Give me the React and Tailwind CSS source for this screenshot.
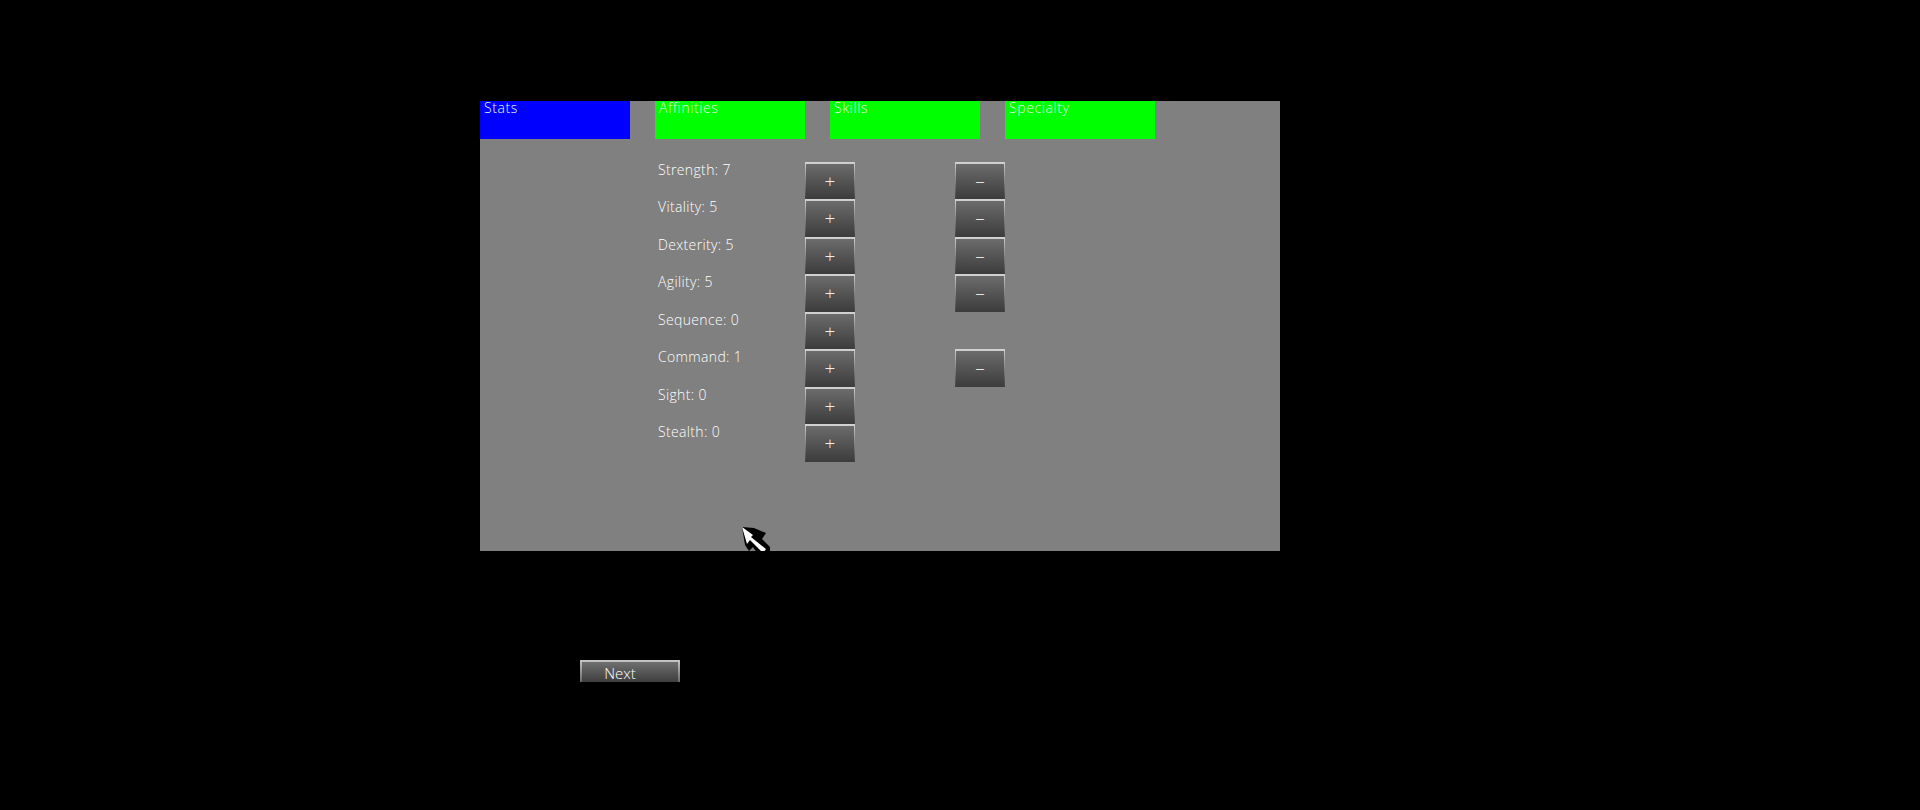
const stats = [
  { name: "Strength", value: 7, minus: true },
  { name: "Vitality", value: 5, minus: true },
  { name: "Dexterity", value: 5, minus: true },
  { name: "Agility", value: 5, minus: true },
  { name: "Sequence", value: 0, minus: false },
  { name: "Command", value: 1, minus: true },
  { name: "Sight", value: 0, minus: false },
  { name: "Stealth", value: 0, minus: false },
];

const tabs = [
  { name: "Stats", active: true },
  { name: "Affinities", active: false },
  { name: "Skills", active: false },
  { name: "Specialty", active: false },
];

const font = "font-['Open_Sans',sans-serif] font-light";

const StatButton = ({ label }) => (
  <button className="block h-[37.5px] w-[50px] bg-gradient-to-b from-[#d4d4d4] to-[#404040] px-px pt-[2px]">
    <span className="flex h-full w-full items-center justify-center bg-gradient-to-b from-[#6c6c6c] to-[#3c3c3c] text-[19px] font-light leading-none text-[#f0f0f0]">
      {label}
    </span>
  </button>
);

const Cursor = () => (
  <div className="absolute left-[260px] top-[424px] h-[26px] w-[30px] overflow-hidden">
    <svg className="h-[30px] w-[30px]" viewBox="0 0 30 30">
      <path d="M2 2 L14 3 L26 8 L22 14 L30 22 L30 30 L18 30 L13 22 L9 26 L5 20 Z" fill="#000" />
      <path d="M2 2 L13 10 L11 12 L26 24 L23 28 L10 15 L7 19 Z" fill="#fff" />
    </svg>
  </div>
);

export default function App() {
  return (
    <div className={`h-[810px] bg-black pt-[101px] ${font}`}>
      <div className="relative ml-[480px] h-[450px] w-[800px] bg-[#808080]">
        <div className="flex gap-[25px]">
          {tabs.map((tab) => (
            <div
              key={tab.name}
              className={`h-[37.5px] w-[150px] pl-1 text-sm leading-[14px] tracking-[0.6px] text-[#e6ffe6] ${
                tab.active ? "bg-[#0000ff]" : "bg-[#00ff00]"
              }`}
            >
              {tab.name}
            </div>
          ))}
        </div>
        <div className="ml-[175px] mt-[23px]">
          {stats.map((stat) => (
            <div key={stat.name} className="flex h-[37.5px]">
              <div className="w-[150px] pl-[3px] pt-px text-sm leading-[14px] tracking-wide text-white">
                {stat.name}: {stat.value}
              </div>
              <StatButton label="+" />
              <div className="w-[100px]" />
              {stat.minus && <StatButton label="–" />}
            </div>
          ))}
        </div>
        <Cursor />
      </div>
      <button className="ml-[580px] mt-[109px] block h-[22px] w-[100px] bg-gradient-to-b from-[#c8c8c8] to-[#6a6a6a] px-[2px] pt-[2px]">
        <span className="block h-full w-full bg-gradient-to-b from-[#707070] to-[#3e3e3e] pr-[20px] pt-[3px] text-[15px] leading-[17px] text-white">
          Next
        </span>
      </button>
    </div>
  );
}
